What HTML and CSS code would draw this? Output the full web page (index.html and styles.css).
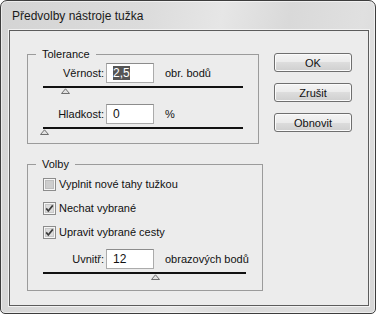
FILE: index.html
```html
<!DOCTYPE html>
<html lang="cs">
<head>
    <meta charset="UTF-8">
    <meta name="viewport" content="width=device-width, initial-scale=1.0">
    <title>Předvolby nástroje tužka</title>
    <link rel="stylesheet" href="styles.css">
</head>
<body>

    <div class="window">
        <div class="titlebar">Předvolby nástroje tužka</div>

        <div class="client">
            <div class="groups">
                <fieldset class="group group-tolerance">
                    <legend>Tolerance</legend>

                    <div class="field-row">
                        <span class="field-label">Věrnost:</span>
                        <div class="textbox"><span class="selected">2,5</span></div>
                        <span class="unit">obr. bodů</span>
                    </div>
                    <div class="slider slider-short">
                        <svg class="thumb" style="left: 18px;" width="9" height="6" viewBox="0 0 9 6"><path d="M0.5 5.5 L4.5 0.8 L8.5 5.5 Z" fill="#e2e2e2" stroke="#6e6e6e"/></svg>
                    </div>

                    <div class="field-row row-spaced">
                        <span class="field-label">Hladkost:</span>
                        <div class="textbox">0</div>
                        <span class="unit">%</span>
                    </div>
                    <div class="slider slider-short">
                        <svg class="thumb" style="left: -3px;" width="9" height="6" viewBox="0 0 9 6"><path d="M0.5 5.5 L4.5 0.8 L8.5 5.5 Z" fill="#e2e2e2" stroke="#6e6e6e"/></svg>
                    </div>
                </fieldset>

                <fieldset class="group group-options">
                    <legend>Volby</legend>

                    <div class="check-list">
                        <label class="check-row">
                            <svg class="checkbox" width="13" height="13" viewBox="0 0 13 13">
                                <rect x="0.5" y="0.5" width="12" height="12" fill="#f6f6f6" stroke="#8c8c8c"/>
                                <rect x="2.5" y="2.5" width="8" height="8" fill="#cdcdcd" stroke="#bdbdbd"/>
                            </svg>
                            Vyplnit nové tahy tužkou
                        </label>
                        <label class="check-row">
                            <svg class="checkbox" width="13" height="13" viewBox="0 0 13 13">
                                <rect x="0.5" y="0.5" width="12" height="12" fill="#f6f6f6" stroke="#8c8c8c"/>
                                <rect x="2.5" y="2.5" width="8" height="8" fill="#dcdcdc" stroke="#c8c8c8"/>
                                <path d="M3.2 6.4 L5.3 9 L9.8 3.4" fill="none" stroke="#3c3c3c" stroke-width="1.7"/>
                            </svg>
                            Nechat vybrané
                        </label>
                        <label class="check-row">
                            <svg class="checkbox" width="13" height="13" viewBox="0 0 13 13">
                                <rect x="0.5" y="0.5" width="12" height="12" fill="#f6f6f6" stroke="#8c8c8c"/>
                                <rect x="2.5" y="2.5" width="8" height="8" fill="#dcdcdc" stroke="#c8c8c8"/>
                                <path d="M3.2 6.4 L5.3 9 L9.8 3.4" fill="none" stroke="#3c3c3c" stroke-width="1.7"/>
                            </svg>
                            Upravit vybrané cesty
                        </label>
                    </div>

                    <div class="field-row row-inside">
                        <span class="field-label">Uvnitř:</span>
                        <div class="textbox">12</div>
                        <span class="unit">obrazových bodů</span>
                    </div>
                    <div class="slider slider-long">
                        <svg class="thumb" style="left: 108px;" width="9" height="6" viewBox="0 0 9 6"><path d="M0.5 5.5 L4.5 0.8 L8.5 5.5 Z" fill="#e2e2e2" stroke="#6e6e6e"/></svg>
                    </div>
                </fieldset>
            </div>

            <div class="buttons">
                <button class="button">OK</button>
                <button class="button">Zrušit</button>
                <button class="button">Obnovit</button>
            </div>
        </div>
    </div>

</body>
</html>
```

FILE: styles.css
```css
* {
    box-sizing: border-box;
}

body {
    margin: 0;
    background-color: #fff;
    font-family: "Liberation Sans", Arial, sans-serif;
    font-size: 11px;
    color: #111;
}

.window {
    width: 376px;
    height: 314px;
    border: 1px solid #3d3d3d;
    border-radius: 7px 7px 5px 5px;
    background: linear-gradient(100deg, #d4d4d4 0%, #dcdcdc 35%, #e6e6e6 52%, #d9d9d9 68%, #e0e0e0 85%, #d6d6d6 100%);
    box-shadow: inset 0 0 0 1px rgba(255, 255, 255, 0.55);
    display: flex;
    flex-direction: column;
}

.titlebar {
    flex: none;
    height: 29px;
    padding: 8px 0 0 11px;
    font-size: 12px;
    line-height: 15px;
    color: #1a1a1a;
}

.client {
    flex: none;
    height: 276px;
    margin: 0 6px 7px 8px;
    border: 1px solid #5c5c5c;
    background-color: #ececec;
    box-shadow: 0 0 0 1px #f2f2f2;
    display: flex;
    padding: 16px 0 0 17px;
}

.groups {
    width: 236px;
    display: flex;
    flex-direction: column;
}

.group {
    margin: 0;
    padding: 0;
    min-width: 0;
    border: 1px solid #9b9b9b;
}

.group legend {
    margin-left: 8px;
    padding: 0 6px;
    line-height: 14px;
}

.group-tolerance {
    width: 232px;
    height: 97px;
}

.group-options {
    width: 236px;
    height: 134px;
    margin-top: 13px;
}

.field-row {
    display: flex;
    align-items: center;
    height: 20px;
    margin-top: 2px;
}

.row-spaced {
    margin-top: 16px;
}

.row-inside {
    margin-top: 5px;
}

.field-label {
    width: 76px;
    text-align: right;
}

.textbox {
    width: 48px;
    height: 20px;
    margin-left: 2px;
    padding-left: 6px;
    border: 1px solid #ababab;
    border-top-color: #8c8c8c;
    background-color: #fff;
    font-size: 12px;
    line-height: 18px;
}

.selected {
    background-color: #555;
    color: #fff;
}

.unit {
    margin-left: 11px;
}

.slider {
    position: relative;
    height: 2px;
    margin: 3px 0 0 15px;
    background-color: #111;
}

.slider-short {
    width: 200px;
}

.slider-long {
    width: 203px;
}

.thumb {
    position: absolute;
    top: 2px;
    display: block;
}

.check-list {
    margin-top: 1px;
}

.check-row {
    display: flex;
    align-items: center;
    height: 24px;
    padding-left: 15px;
}

.checkbox {
    flex: none;
    margin-right: 3px;
}

.buttons {
    display: flex;
    flex-direction: column;
    gap: 11px;
    margin: 6px 0 0 11px;
}

.button {
    width: 78px;
    height: 19px;
    padding: 0;
    border: 1px solid #6f6f6f;
    border-radius: 3px;
    background: linear-gradient(#f4f4f4 0%, #ebebeb 50%, #dddddd 50%, #cfcfcf 100%);
    box-shadow: inset 0 0 0 1px #fbfbfb;
    font-family: "Liberation Sans", Arial, sans-serif;
    font-size: 11px;
    color: #111;
}
```
